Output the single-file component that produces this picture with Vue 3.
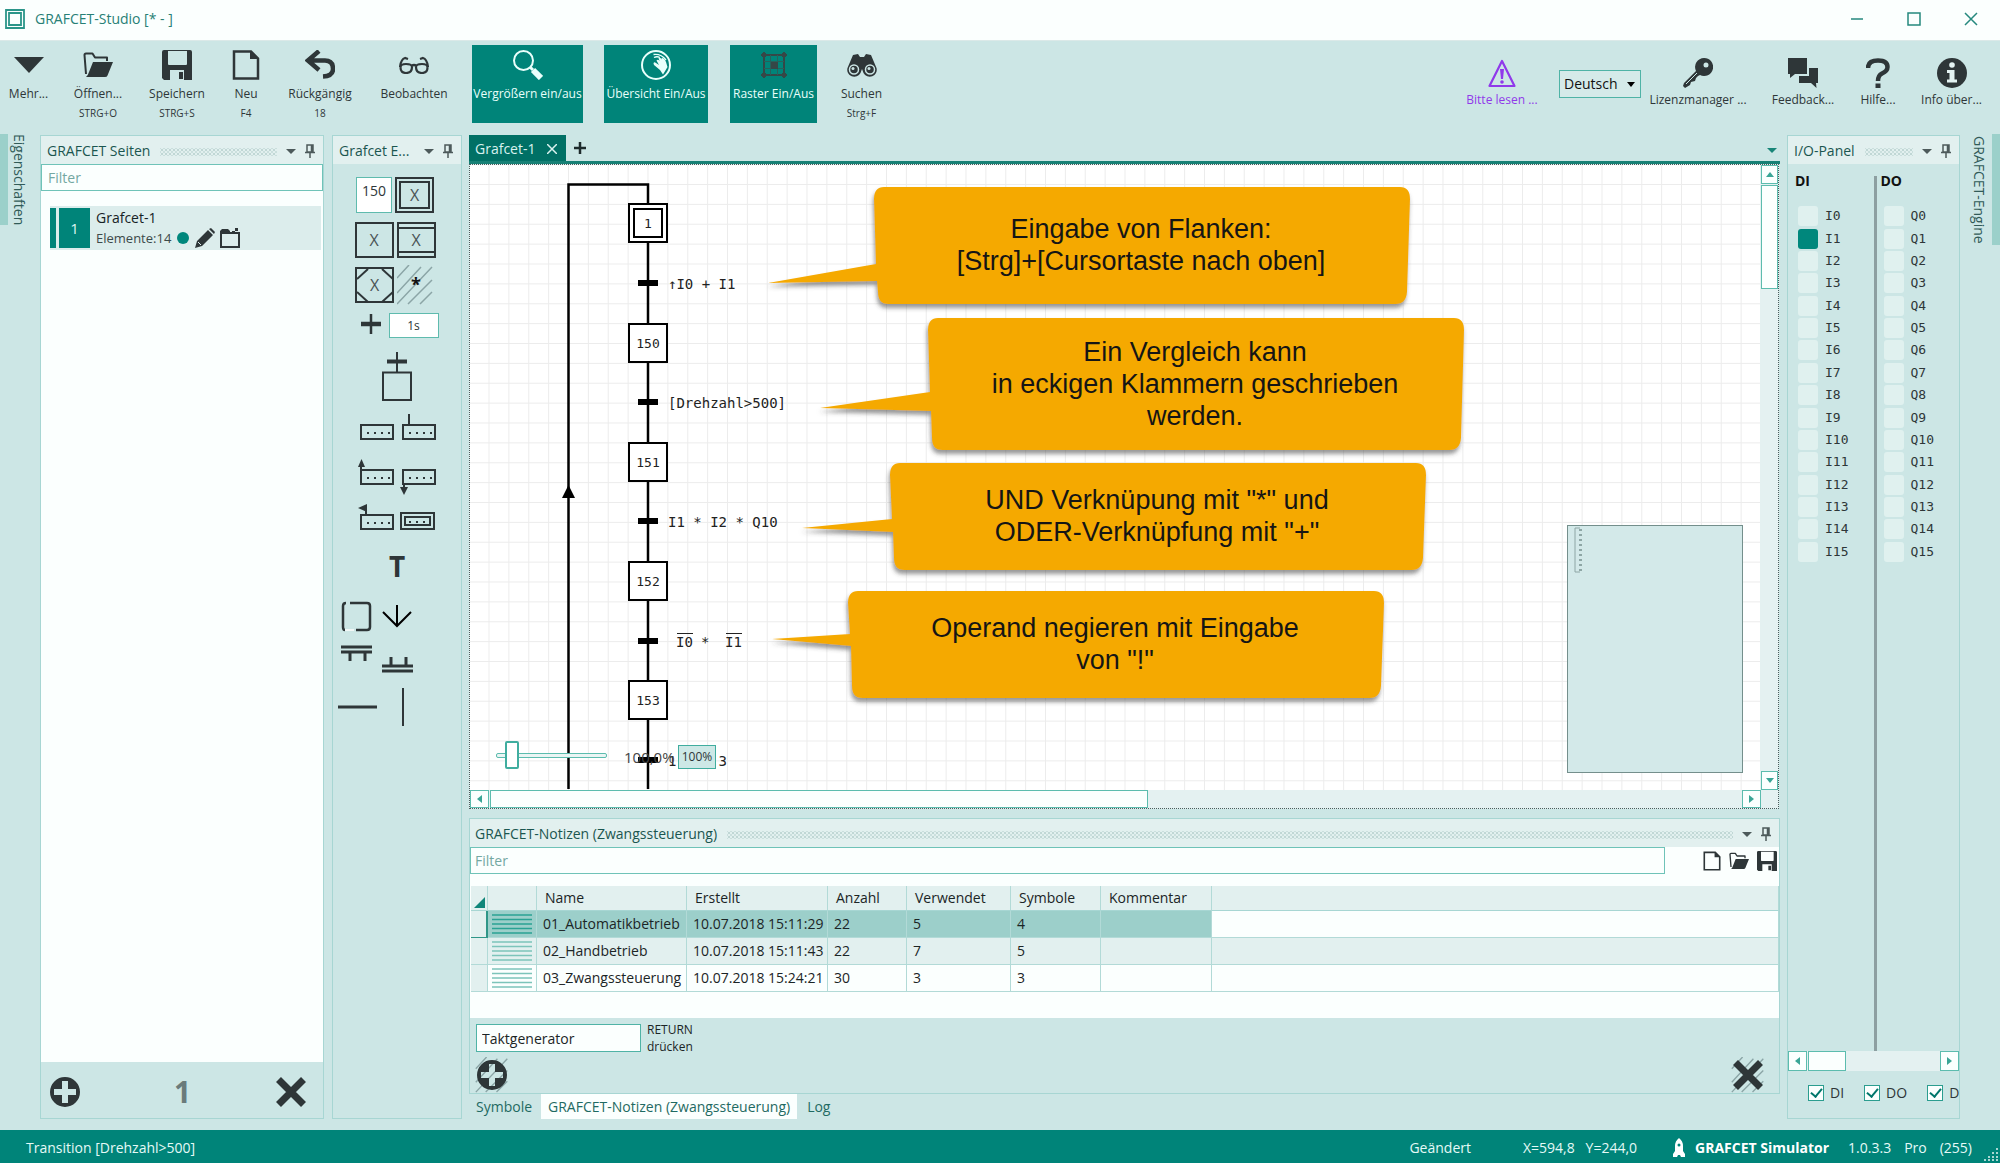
<script setup>
import { ref } from 'vue'

const inputs = ref(Array.from({ length: 16 }, (_, i) => i === 1))
const outputs = ref(Array.from({ length: 16 }, () => false))
const language = ref('Deutsch')
const zoom = ref(8)
const command = ref('Taktgenerator')
const stepNumber = ref('150')
const delay = ref('1s')
const visible = ref([true, true, true])

const steps = [
  { y: 223, name: '1', initial: true },
  { y: 343, name: '150' },
  { y: 462, name: '151' },
  { y: 581, name: '152' },
  { y: 700, name: '153' }
]
const transitions = [
  { y: 283, text: '↑I0 + I1' },
  { y: 402, text: '[Drehzahl>500]' },
  { y: 521, text: 'I1 * I2 * Q10' },
  { y: 641, text: '' },
  { y: 760, text: '1    ,3' }
]
const callouts = [
  { x: 874, y: 187, h: 117, tip: [768, 283], join: [264, 281], first: 238, lines: ['Eingabe von Flanken:', '[Strg]+[Cursortaste nach oben]'] },
  { x: 928, y: 318, h: 132, tip: [820, 408], join: [392, 411], first: 361, lines: ['Ein Vergleich kann', 'in eckigen Klammern geschrieben', 'werden.'] },
  { x: 890, y: 463, h: 107, tip: [802, 528], join: [519, 532], first: 509, lines: ['UND Verknüpung mit "*" und', 'ODER-Verknüpfung mit "+"'] },
  { x: 848, y: 591, h: 107, tip: [772, 639], join: [634, 646], first: 637, lines: ['Operand negieren mit Eingabe', 'von "!"'] }
]
function bubble(c) {
  const l = c.x, r = c.x + 536, t = c.y, b = c.y + c.h
  return `M${l + 10} ${t}H${r - 10}Q${r} ${t} ${r} ${t + 12}L${r - 3} ${b - 12}Q${r - 4} ${b} ${r - 14} ${b}` +
    `H${l + 14}Q${l + 4} ${b} ${l + 4} ${b - 12}L${l + 3} ${c.join[1]}L${c.tip[0]} ${c.tip[1]}L${l + 2} ${c.join[0]}L${l} ${t + 12}Q${l} ${t} ${l + 10} ${t}Z`
}

const notes = [
  { name: '01_Automatikbetrieb', created: '10.07.2018 15:11:29', count: 22, used: 5, symbols: 4 },
  { name: '02_Handbetrieb', created: '10.07.2018 15:11:43', count: 22, used: 7, symbols: 5 },
  { name: '03_Zwangssteuerung', created: '10.07.2018 15:24:21', count: 30, used: 3, symbols: 3 }
]
</script>

<template>
  <div class="app">
    <svg class="defs" width="0" height="0" aria-hidden="true">
      <symbol id="pin" viewBox="0 0 10 14"><path d="M2 1H8V8H2ZM6.500 1V8M0 8.500H10M5 9V14" fill="none" stroke="currentColor" stroke-width="1.500" /></symbol>
      <symbol id="doc" viewBox="0 0 28 30"><path d="M2 1.500H19L26 8.500V28.500H2Z" fill="none" stroke="currentColor" stroke-width="2.500" /><path d="M18 1V9H27Z" fill="currentColor" /></symbol>
      <symbol id="folder" viewBox="0 0 30 26"><path d="M3 22L1.500 3Q1.500 1.500 3 1.500H9.500L12 5.500H24V9" fill="none" stroke="currentColor" stroke-width="2" stroke-linejoin="round" /><path d="M10 10H30L24.500 23.500Q24 25 22 25H3Q5 23.500 6 20Z" fill="currentColor" /></symbol>
      <symbol id="save" viewBox="0 0 30 30"><path fill-rule="evenodd" d="M2 0H28Q30 0 30 2V30H2L0 28V2Q0 0 2 0ZM6 1V14Q6 15 7 15H24Q25 15 25 14V1ZM8 20V30H22V20ZM17 22H21V29H17Z" fill="currentColor" /></symbol>
      <symbol id="plus" viewBox="0 0 30 30"><path fill-rule="evenodd" d="M15 0A15 15 0 1 0 15 30A15 15 0 1 0 15 0ZM12 4H18V12H26V18H18V26H12V18H4V12H12Z" fill="currentColor" /></symbol>
      <symbol id="cross" viewBox="0 0 30 30"><path d="M2.500 2.500L27.500 27.500M27.500 2.500L2.500 27.500" stroke="currentColor" stroke-width="7" /></symbol>
      <symbol id="hatch" viewBox="0 0 36 40"><path d="M0 13L12 0M0 28L24 2M0 39L35 2M11 39L35 15M23 39L35 27" stroke="#8ba5a6" stroke-width="1.500" /></symbol>
    </svg>

    <header class="titlebar">
      <svg width="20" height="20" viewBox="0 0 20 20"><path d="M1 1H19V19H1ZM4 4H16V16H4Z" fill="none" stroke="#2b9589" stroke-width="1.800" /></svg>
      <h1>GRAFCET-Studio [* - ]</h1>
      <div class="window-buttons">
        <button aria-label="Minimieren"><svg width="14" height="14"><path d="M1 7H13" /></svg></button>
        <button aria-label="Maximieren"><svg width="14" height="14"><path d="M1 1H13V13H1Z" /></svg></button>
        <button aria-label="Schließen"><svg width="14" height="14"><path d="M1 1L13 13M13 1L1 13" /></svg></button>
      </div>
    </header>

    <nav class="toolbar">
      <div class="tools left">
        <button><span class="icon"><svg width="30" height="16"><path d="M0 0H30L15 16Z" fill="currentColor" /></svg></span><b>Mehr...</b></button>
        <button><span class="icon"><svg width="30" height="26"><use href="#folder" /></svg></span><b>Öffnen...</b><small>STRG+O</small></button>
        <button><span class="icon"><svg width="30" height="30"><use href="#save" /></svg></span><b>Speichern</b><small>STRG+S</small></button>
        <button><span class="icon"><svg width="28" height="30"><use href="#doc" /></svg></span><b>Neu</b><small>F4</small></button>
        <button><span class="icon"><svg width="30" height="30" viewBox="0 0 30 30"><path d="M14 1L3 10.500L14 20M4 10.500H20Q28 10.500 28 19Q28 26 18 26.500" fill="none" stroke="currentColor" stroke-width="4.500" /></svg></span><b>Rückgängig</b><small>18</small></button>
        <button><span class="icon"><svg width="30" height="18" viewBox="0 0 30 18"><path d="M1.500 11.500Q1.500 8 7 8Q13 8 13 11Q13 17 7 17Q1.500 17 1.500 11.500ZM17 11Q17 8 23 8Q28.500 8 28.500 11.500Q28.500 17 23 17Q17 17 17 11ZM12.500 10Q15 8 17.500 10M1 11Q2 3 6 2L9 3M29 11Q28 3 24 2L21 3" fill="none" stroke="currentColor" stroke-width="2.200" /></svg></span><b>Beobachten</b></button>
        <button class="on zoomer"><span class="icon"><svg width="30" height="30" viewBox="0 0 30 30"><circle cx="10.500" cy="10.500" r="9.500" fill="none" stroke="#e9fffb" stroke-width="2" /><path d="M17 17L20 20" stroke="#e9fffb" stroke-width="3" /><path d="M20 20L28 28" stroke="#e9fffb" stroke-width="6" /></svg></span><b>Vergrößern ein/aus</b></button>
        <button class="on overview"><span class="icon"><svg width="30" height="30" viewBox="0 0 30 30"><circle cx="15" cy="15" r="14" fill="none" stroke="#e9fffb" stroke-width="2" /><path d="M12.500 13.500Q13 11.500 15 13L18 15L15.500 10.500Q17 9 18.500 11L17.500 8Q19.500 7 21 9.500L20.500 8Q23 7.500 25 12L26.500 17L22 24.500L19 20L13 15Z" fill="#e9fffb" /><path d="M12.500 4.500Q20 3.500 25 10M13 7.500Q16 6 19 7.500" fill="none" stroke="#e9fffb" stroke-width="1.300" /></svg></span><b>Übersicht Ein/Aus</b></button>
        <button class="on raster"><span class="icon"><svg width="26" height="26" viewBox="0 0 26 26"><path d="M3 0V26M23 0V26M0 3H26M0 23H26" stroke="#354747" stroke-width="2" /><path d="M9.500 3V23M16.500 3V23M3 9.500H23M3 16.500H23" stroke="#27605b" stroke-width="1" /><path d="M10 10H17V17H10ZM1 1H5V5H1ZM21 1H25V5H21ZM1 21H5V25H1ZM21 21H25V25H21Z" fill="#354747" /></svg></span><b>Raster Ein/Aus</b></button>
        <button><span class="icon"><svg width="30" height="24" viewBox="0 0 30 24"><path d="M6 2L11 1L13 4H17L19 1L24 2L29.500 15A7 7 0 0 1 16.500 20L15 16L13.500 20A7 7 0 0 1 .5 15Z" fill="currentColor" /><g fill="none" stroke="#cce6e5"><circle cx="7" cy="16.500" r="4.500" stroke-width="1.500" /><circle cx="23" cy="16.500" r="4.500" stroke-width="1.500" /></g><circle cx="6" cy="15.500" r="1.500" fill="#cce6e5" /><circle cx="22" cy="15.500" r="1.500" fill="#cce6e5" /></svg></span><b>Suchen</b><small>Strg+F</small></button>
      </div>
      <div class="tools right">
        <button class="read"><span class="icon"><svg width="30" height="30" viewBox="0 0 30 30"><path d="M15 3L27.500 28H2.500Z" fill="none" stroke="currentColor" stroke-width="2.200" stroke-linejoin="round" /><path d="M13 11H17L16 21H14Z" fill="currentColor" /><circle cx="15" cy="24" r="1.800" fill="currentColor" /></svg></span><b>Bitte lesen ...</b></button>
        <div class="language">
          <select v-model="language" aria-label="Sprache"><option>Deutsch</option><option>English</option></select>
          <svg width="8" height="5"><path d="M0 0H8L4 5Z" fill="#000" /></svg>
        </div>
        <button><span class="icon"><svg width="30" height="30" viewBox="0 0 30 30"><path fill-rule="evenodd" d="M21 0A9 9 0 1 1 17 17L15 18L13 20L12 23L8 24L7 27L2 30L0 28L1 25L13 13A9 9 0 0 1 21 0ZM23 4.500A2.500 2.500 0 1 0 23 9.500A2.500 2.500 0 1 0 23 4.500Z" fill="currentColor" /><path d="M3 26L14 15" stroke="#cce6e5" stroke-width="1" /></svg></span><b>Lizenzmanager ...</b></button>
        <button><span class="icon"><svg width="30" height="30" viewBox="0 0 30 30"><path d="M0 0H19V16H7L2 20V16H0Z" fill="currentColor" /><path d="M21 10H30V25H28L28.500 30L23 25H11V18H21Z" fill="currentColor" /></svg></span><b>Feedback...</b></button>
        <button><span class="icon"><svg width="24" height="30" viewBox="0 0 24 30"><path d="M2 10Q2 2.500 12 2.500Q21.500 2.500 21.500 9Q21.500 13 16 15.500Q12 17.500 12 23" fill="none" stroke="currentColor" stroke-width="4.500" /><path d="M9.500 25.500H14.500V30H9.500Z" fill="currentColor" /></svg></span><b>Hilfe...</b></button>
        <button class="info"><span class="icon"><svg width="30" height="30" viewBox="0 0 30 30"><circle cx="15" cy="15" r="15" fill="currentColor" /><circle cx="15" cy="7" r="2.800" fill="#e4f3f2" /><path d="M10 12H17.500V21.500H20V24.500H10V21.500H12.500V15H10Z" fill="#e4f3f2" /></svg></span><b>Info über...</b></button>
      </div>
    </nav>

    <div class="workspace">
      <aside class="strip"><button>Eigenschaften</button></aside>

      <section class="panel pages">
        <header class="panel-head"><h2>GRAFCET Seiten</h2><i class="grip"></i><button class="caret" aria-label="Menü"></button><button class="pin" aria-label="Anheften"><svg width="10" height="14"><use href="#pin" /></svg></button></header>
        <input class="filter" type="text" placeholder="Filter" aria-label="Seiten filtern">
        <div class="page-list">
          <article class="page">
            <span class="mark"></span><span class="index">1</span>
            <div>
              <p class="page-name">Grafcet-1</p>
              <p class="page-info">Elemente:14
                <svg width="14" height="14"><circle cx="7" cy="7" r="6" fill="#00877c" /></svg>
                <svg width="20" height="20" viewBox="0 0 20 20"><path d="M0 20L2 13L13 2L18 7L7 18ZM14 1L16 0L20 4L19 6Z" fill="#2e3638" /><path d="M3 14L6 17" stroke="#e2f0ef" stroke-width="1" /></svg>
                <svg width="20" height="20" viewBox="0 0 20 20"><path d="M1 5V19H19V5Z" fill="none" stroke="#2e3638" stroke-width="2" /><path d="M0 6V3L2 1H8L10 3V6ZM12 3H15V5H12ZM15 0H18V3H15Z" fill="#2e3638" /></svg>
              </p>
            </div>
          </article>
        </div>
        <footer class="page-foot">
          <button aria-label="Seite hinzufügen"><svg width="30" height="30"><use href="#plus" /></svg></button>
          <strong>1</strong>
          <button aria-label="Seite löschen"><svg width="30" height="30"><use href="#cross" /></svg></button>
        </footer>
      </section>

      <section class="panel elements">
        <header class="panel-head"><h2>Grafcet E...</h2><i class="space"></i><button class="caret" aria-label="Menü"></button><button class="pin" aria-label="Anheften"><svg width="10" height="14"><use href="#pin" /></svg></button></header>
        <div class="palette">
          <div class="row h36 tight">
            <input v-model="stepNumber" class="number" type="text" aria-label="Schrittnummer">
            <button class="cell dbl" aria-label="Anfangsschritt"><span>X</span></button>
          </div>
          <div class="row h36 tight">
            <button class="cell" aria-label="Schritt">X</button>
            <button class="cell macro" aria-label="Makroschritt"><span>X</span></button>
          </div>
          <div class="row h36 tight">
            <button class="cell oct" aria-label="Einschließender Schritt"><svg width="36" height="33" viewBox="0 0 36 33"><path d="M0 10L11 0M25 0L36 10M0 23L11 33M25 33L36 23" stroke="#2e3638" stroke-width="2" /></svg><span>X</span></button>
            <button class="star" aria-label="Aktivierung"><svg width="36" height="40"><use href="#hatch" /></svg><span>*</span></button>
          </div>
          <div class="row h26 wait">
            <button aria-label="Transition"><svg width="20" height="20"><path d="M0 10H20" stroke="#2e3638" stroke-width="4.500" /><path d="M10 0V20" stroke="#2e3638" stroke-width="2.500" /></svg></button>
            <input v-model="delay" class="delay" type="text" aria-label="Zeit">
          </div>
          <div class="row h54"><button aria-label="Transition und Schritt"><svg width="30" height="49" viewBox="0 0 30 49"><path d="M5 9.500H25" stroke="#2e3638" stroke-width="4" /><path d="M15 0V20M1 20.500H29V48H1Z" fill="none" stroke="#2e3638" stroke-width="2" /></svg></button></div>
          <div class="row h30 acts">
            <button aria-label="Aktion"><svg width="36" height="26"><path d="M3 11H35V25H3Z" class="ol" /><path d="M9 19H32" class="dots" /></svg></button>
            <button aria-label="Bedingte Aktion"><svg width="36" height="26"><path d="M3 11H35V25H3ZM9 0V11" class="ol" /><path d="M9 19H32" class="dots" /></svg></button>
          </div>
          <div class="row h46 acts">
            <button aria-label="Aktion bei Aktivierung"><svg width="36" height="36"><path d="M3 11H35V25H3ZM3 11V5" class="ol" /><path d="M9 19H32" class="dots" /><path d="M0 8L3.500 0L7 8Z" fill="#2e3638" /></svg></button>
            <button aria-label="Aktion bei Deaktivierung"><svg width="36" height="36"><path d="M3 11H35V25H3ZM4 25V30" class="ol" /><path d="M9 19H32" class="dots" /><path d="M0 28H8L4 36Z" fill="#2e3638" /></svg></button>
          </div>
          <div class="row h26 acts">
            <button aria-label="Aktion bei Ereignis"><svg width="36" height="26"><path d="M3 11H35V25H3ZM8 11V3" class="ol" /><path d="M9 19H32" class="dots" /><path d="M0 4L9 0V8Z" fill="#2e3638" /></svg></button>
            <button aria-label="Zwangssteuerung"><svg width="36" height="26"><path d="M1 9H34V25H1ZM5 13H30V21H5Z" class="ol" /><path d="M9 18H28" class="dots" /></svg></button>
          </div>
          <div class="row h53"><button class="text-tool">T</button></div>
          <div class="row h31 links">
            <button aria-label="Schleife"><svg width="31" height="31"><path d="M9 2H26Q29 2 29 5V26Q29 29 26 29H15M4 29Q2 29 2 26V5Q2 2 5 2" fill="none" stroke="#2e3638" stroke-width="2.500" /><path d="M4 29H13" stroke="#f2f8f7" stroke-width="2" /></svg></button>
            <button aria-label="Verzweigung"><svg width="30" height="27"><path d="M1 7L15 21L29 7M15 0V21" fill="none" stroke="#000" stroke-width="2" /></svg></button>
          </div>
          <div class="row h32 links">
            <button class="up" aria-label="Parallele Verzweigung"><svg width="31" height="16"><path d="M0 2H31M0 7H31M9 7V16M24 7V16" fill="none" stroke="#2e3638" stroke-width="3" /></svg></button>
            <button aria-label="Parallele Zusammenführung"><svg width="31" height="16"><path d="M0 9H31M0 14H31M9 0V9M24 0V9" fill="none" stroke="#2e3638" stroke-width="3" /></svg></button>
          </div>
          <div class="row h50 lines">
            <button aria-label="Horizontale Linie"><svg width="39" height="4"><path d="M0 2H39" stroke="#2e3638" stroke-width="3" /></svg></button>
            <button aria-label="Vertikale Linie"><svg width="4" height="38"><path d="M2 0V38" stroke="#2e3638" stroke-width="2" /></svg></button>
          </div>
        </div>
      </section>

      <main class="centre">
        <div class="doc-tabs">
          <button class="doc-tab">Grafcet-1<svg width="10" height="10"><path d="M0 0L10 10M10 0L0 10" stroke="currentColor" stroke-width="1.500" /></svg></button>
          <button class="add" aria-label="Neues Dokument"><svg width="12" height="12"><path d="M0 6H12M6 0V12" stroke="#1e2b2c" stroke-width="2.500" /></svg></button>
          <button class="more" aria-label="Dokumentliste"></button>
        </div>
        <div class="editor">
          <div class="canvas">
            <svg class="chart" width="100%" height="100%">
              <defs>
                <pattern id="grid" x="568" y="184" width="19.875" height="19.875" patternUnits="userSpaceOnUse"><path d="M.5 0V20M0 .5H20" stroke="#ececec" stroke-width="1" fill="none" /></pattern>
                <filter id="shade" x="-5%" y="-5%" width="110%" height="120%"><feDropShadow dx="-1" dy="4" stdDeviation="2" flood-color="#444" flood-opacity=".55" /></filter>
              </defs>
              <g transform="translate(-470 -165)">
                <rect x="470" y="165" width="100%" height="100%" fill="url(#grid)" />
                <path d="M568.500 789V184.500H648V789" fill="none" stroke="#000" stroke-width="2.500" />
                <path d="M568.500 485L575 498H562Z" />
                <g v-for="s in steps" :key="s.name">
                  <rect x="629" :y="s.y - 19" width="38" height="38" fill="#fff" stroke="#000" stroke-width="2" />
                  <rect v-if="s.initial" x="634" :y="s.y - 14" width="28" height="28" fill="#fff" stroke="#000" stroke-width="2" />
                  <text class="step" x="648" :y="s.y + 5">{{ s.name }}</text>
                </g>
                <g v-for="t in transitions" :key="t.y">
                  <rect x="638" :y="t.y - 3" width="20" height="6" />
                  <text class="cond" x="668" :y="t.y + 6">{{ t.text }}</text>
                </g>
                <text class="cond" x="676" y="647">I0</text><text class="cond" x="701" y="647">*</text><text class="cond" x="725" y="647">I1</text>
                <path d="M677 633.500H693M726 633.500H742" stroke="#222" />
                <g v-for="c in callouts" :key="c.y">
                  <path :d="bubble(c)" fill="#f5a906" filter="url(#shade)" />
                  <text v-for="(line, i) in c.lines" :key="line" class="hint" :x="c.x + 267" :y="c.first + i * 32">{{ line }}</text>
                </g>
              </g>
            </svg>
            <div class="zoom-box">
              <input v-model="zoom" type="range" min="0" max="100" aria-label="Vergrößerung">
              <output>100,0%</output>
              <button>100%</button>
            </div>
            <div class="minimap"><svg width="10" height="48"><path d="M1 2V46H6M1 2H6" fill="none" stroke="#8ea6a5" /><path d="M6.500 3V46" stroke="#8ea6a5" stroke-width="3" stroke-dasharray="2 3" fill="none" /></svg></div>
          </div>
          <div class="vbar"><button aria-label="Nach oben"><svg width="8" height="5"><path d="M0 5H8L4 0Z" /></svg></button><i></i><button aria-label="Nach unten"><svg width="8" height="5"><path d="M0 0H8L4 5Z" /></svg></button></div>
          <div class="hbar"><button aria-label="Nach links"><svg width="5" height="8"><path d="M5 0V8L0 4Z" /></svg></button><i></i><button aria-label="Nach rechts"><svg width="5" height="8"><path d="M0 0V8L5 4Z" /></svg></button></div>
        </div>

        <section class="panel notes">
          <header class="panel-head"><h2>GRAFCET-Notizen (Zwangssteuerung)</h2><i class="grip"></i><button class="caret" aria-label="Menü"></button><button class="pin" aria-label="Anheften"><svg width="10" height="14"><use href="#pin" /></svg></button></header>
          <div class="note-filter">
            <input class="filter" type="text" placeholder="Filter" aria-label="Notizen filtern">
            <button aria-label="Neu"><svg width="18" height="20"><use href="#doc" /></svg></button>
            <button aria-label="Öffnen"><svg width="20" height="18"><use href="#folder" /></svg></button>
            <button aria-label="Speichern"><svg width="20" height="20"><use href="#save" /></svg></button>
          </div>
          <div class="table-box">
            <table>
              <colgroup><col class="c0"><col class="c1"><col class="c2"><col class="c3"><col class="c4"><col class="c5"><col class="c6"><col class="c7"><col></colgroup>
              <thead><tr><th class="corner"><svg width="11" height="11"><path d="M11 0V11H0Z" fill="#10867a" /></svg></th><th></th><th>Name</th><th>Erstellt</th><th>Anzahl</th><th>Verwendet</th><th>Symbole</th><th>Kommentar</th><th></th></tr></thead>
              <tbody>
                <tr v-for="(n, i) in notes" :key="n.name" :class="{ selected: i === 0, even: i === 1 }">
                  <td class="handle"></td>
                  <td class="sheet"><svg width="40" height="20"><path d="M0 1H40M0 5.500H40M0 10H40M0 14.500H40M0 19H40" stroke-width="1.500" /></svg></td>
                  <td>{{ n.name }}</td><td>{{ n.created }}</td><td>{{ n.count }}</td><td>{{ n.used }}</td><td>{{ n.symbols }}</td><td></td><td></td>
                </tr>
              </tbody>
            </table>
          </div>
          <div class="note-entry"><input id="cmd" v-model="command" type="text"><label for="cmd">RETURN<br>drücken</label></div>
          <div class="note-foot">
            <button aria-label="Notiz hinzufügen"><svg class="back" width="36" height="36"><use href="#hatch" /></svg><svg width="30" height="30"><use href="#plus" /></svg></button>
            <button aria-label="Notiz löschen"><svg class="back" width="36" height="36"><use href="#hatch" /></svg><svg width="30" height="30"><use href="#cross" /></svg></button>
          </div>
        </section>
        <div class="bottom-tabs"><button>Symbole</button><button class="active">GRAFCET-Notizen (Zwangssteuerung)</button><button>Log</button></div>
      </main>

      <section class="panel io">
        <header class="panel-head"><h2>I/O-Panel</h2><i class="grip"></i><button class="caret" aria-label="Menü"></button><button class="pin" aria-label="Anheften"><svg width="10" height="14"><use href="#pin" /></svg></button></header>
        <div class="io-body">
          <div class="io-col">
            <h3>DI</h3>
            <div class="bits"><label v-for="(v, i) in inputs" :key="i"><input v-model="inputs[i]" type="checkbox">I{{ i }}</label></div>
          </div>
          <i class="divider"></i>
          <div class="io-col">
            <h3>DO</h3>
            <div class="bits"><label v-for="(v, i) in outputs" :key="i"><input v-model="outputs[i]" type="checkbox">Q{{ i }}</label></div>
          </div>
        </div>
        <div class="hbar"><button aria-label="Nach links"><svg width="5" height="8"><path d="M5 0V8L0 4Z" /></svg></button><i></i><button aria-label="Nach rechts"><svg width="5" height="8"><path d="M0 0V8L5 4Z" /></svg></button></div>
        <div class="io-checks">
          <label><input v-model="visible[0]" type="checkbox">DI</label>
          <label><input v-model="visible[1]" type="checkbox">DO</label>
          <label><input v-model="visible[2]" type="checkbox">D</label>
        </div>
      </section>

      <aside class="strip end"><button>GRAFCET-Engine</button></aside>
    </div>

    <footer class="status">
      <span>Transition [Drehzahl&gt;500]</span>
      <span class="changed">Geändert</span>
      <span class="pos">X=594,8&nbsp;&nbsp; Y=244,0</span>
      <svg width="12" height="20" viewBox="0 0 12 20"><path d="M6 0Q10 3 10 8V13L12 16V19H8L7 17H5L4 19H0V16L2 13V8Q2 3 6 0Z" fill="#fff" /><circle cx="6" cy="7" r="1.500" fill="#00847a" /></svg>
      <strong>GRAFCET Simulator</strong>
      <span class="ver">1.0.3.3</span><span class="ed">Pro</span><span>(255)</span>
      <svg class="resize" width="14" height="14"><path d="M12 2h2M8 6h2M12 6h2M4 10h2M8 10h2M12 10h2M0 13h2M4 13h2M8 13h2M12 13h2" stroke="#a8d6d1" stroke-width="2" /></svg>
    </footer>
  </div>
</template>

<style>
body { margin: 0; }
</style>

<style scoped>
* { box-sizing: border-box; }
.app {
  display: flex; flex-direction: column; min-height: 100vh; overflow: hidden;
  background: #cce6e5; color: #2e3638;
  font: 14px/20px "Open Sans", "Noto Sans", sans-serif;
}
.defs { position: absolute; }
svg { display: block; flex: none; }
h1, h2, h3, p { margin: 0; font: inherit; }
button { border: 0; padding: 0; background: none; font: inherit; color: inherit; white-space: nowrap; }
input, select { font: inherit; color: inherit; border-radius: 0; outline: 0; margin: 0; }

.titlebar { display: flex; align-items: center; height: 41px; padding: 0 22px 2px 5px; gap: 10px; background: #fbfffe; color: #287f76; border-bottom: 1px solid #dbe9e8; }
.window-buttons { display: flex; gap: 43px; margin-left: auto; }
.window-buttons path { fill: none; stroke: #26897e; stroke-width: 1.5; }

.toolbar { display: flex; justify-content: space-between; padding: 4px 0 11px; }
.tools { display: grid; }
.left { grid-template-columns: 57px 82px 76px 62px 86px 102px 126px 130px 105px 71px; }
.right { grid-template-columns: 98px 98px 98px 112px 38px 103px; }
.tools > button { display: flex; flex-direction: column; align-items: center; height: 78px; padding-top: 5px; font-size: 12px; }
.right > button { padding-top: 13px; }
.right > button b { line-height: 24px; }
.right > .info { padding-left: 6px; }
.icon { display: flex; align-items: center; height: 30px; }
.tools b { font-weight: 400; line-height: 28px; }
.tools small { font-size: 10px; line-height: 10px; }
.on { background: #008479; color: #e9fffb; }
.zoomer { margin: 0 8px 0 7px; }
.overview { margin: 0 13px; }
.raster { margin: 0 9px; }
.read { color: #9039ea; }
.language { position: relative; align-self: start; justify-self: center; width: 82px; margin-top: 25px; }
.language select { appearance: none; width: 100%; height: 28px; padding: 0 4px; border: 1px solid #4fb3a6; background: #d5eae9; color: #111; }
.language svg { position: absolute; right: 6px; top: 12px; pointer-events: none; }

.workspace { display: flex; flex: 1; padding-bottom: 11px; }
.strip { width: 40px; flex: none; }
.strip button { writing-mode: vertical-rl; line-height: 20px; padding-left: 1px; border-left: 8px solid #9bd0ca; height: 91px; color: #315b58; }
.strip.end { display: flex; justify-content: flex-end; }
.strip.end button { border-left: 0; border-right: 8px solid #9bd0ca; padding: 0 3px 0 0; height: 111px; }

.panel { display: flex; flex-direction: column; border: 1px solid #a7d6d3; margin-top: 1px; }
.panel-head { display: flex; align-items: center; height: 28px; padding: 2px 8px 0 6px; background: #e2f0ef; color: #1b5650; flex: none; }
.panel-head h2 { white-space: nowrap; }
.grip, .space { flex: 1; height: 8px; margin: 2px 9px 0 10px; }
.grip { background: radial-gradient(circle, #9fbfbd 1px, transparent 1px) 0 0 / 4px 4px, radial-gradient(circle, #b4cfcd 1px, transparent 1px) 2px 2px / 4px 4px; opacity: .5; }
.caret { border: 5px solid transparent; border-top-color: #4d5a5b; border-bottom: 0; margin-right: 9px; }
.pin { color: #4d5a5b; }
.filter { height: 27px; padding: 0 6px; border: 1px solid #6fc3b8; background: #fbfffe; }
.filter::placeholder { color: #74a8a2; opacity: 1; }

.pages { width: 284px; margin-right: 8px; flex: none; }
.page-list { flex: 1; background: #fbfffe; padding: 15px 2px 0 9px; }
.page { display: flex; align-items: center; height: 44px; background: #dcedec; }
.mark { width: 6px; height: 40px; background: #008479; margin-right: 3px; }
.index { width: 31px; height: 40px; line-height: 40px; text-align: center; background: #008479; color: #dff5f2; margin-right: 6px; font-size: 15px; }
.page-name { color: #162225; }
.page-info { display: flex; align-items: center; gap: 5px; font-size: 13px; color: #3c4a4b; }
.page-foot { display: flex; align-items: center; justify-content: space-between; height: 56px; padding: 4px 17px 0 9px; }
.page-foot strong { font-size: 30px; color: #6a7b7b; padding-left: 9px; }

.elements { width: 130px; margin-right: 7px; flex: none; }
.elements .space { margin: 0; }
.palette { display: flex; flex-direction: column; gap: 9px; padding-top: 13px; }
.row { display: flex; justify-content: center; align-items: flex-end; }
.row button { display: block; }
.h26 { height: 26px; } .h30 { height: 30px; } .h31 { height: 31px; } .h32 { height: 32px; } .h36 { height: 36px; }
.h46 { height: 46px; } .h50 { height: 50px; } .h53 { height: 53px; align-items: center; } .h54 { height: 54px; }
.tight { gap: 3px; padding-right: 4px; }
.number { width: 36px; height: 36px; padding: 0 0 9px; text-align: center; border: 1px solid #5fbbae; background: #fff; }
.row .cell { display: grid; place-items: center; position: relative; width: 39px; height: 36px; border: 2px solid #2e3638; color: #4a5456; font-size: 16px; }
.dbl span { border: 2px solid #2e3638; width: 31px; height: 28px; line-height: 24px; }
.macro span { border: solid #2e3638; border-width: 2px 0; width: 35px; height: 26px; line-height: 22px; }
.oct svg, .star svg { position: absolute; left: 0; top: 0; }
.oct span { position: relative; }
.row .star { position: relative; width: 38px; height: 38px; font-size: 18px; font-weight: 700; color: #111; }
.star span { position: relative; }
.wait { gap: 8px; padding-left: 5px; }
.wait button { padding-bottom: 4px; }
.delay { width: 50px; height: 25px; padding: 0; text-align: center; font-size: 12px; border: 1px solid #5fbbae; background: #fff; }
.acts { gap: 6px; }
.ol { fill: none; stroke: #2e3638; stroke-width: 2; }
.dots { stroke: #2e3638; stroke-width: 2; stroke-dasharray: 2 5; }
.text-tool { font: 700 28px/32px "Open Sans", sans-serif; }
.links { justify-content: flex-start; gap: 10px; padding-left: 8px; }
.links .up { align-self: flex-start; padding-top: 4px; }
.lines { justify-content: flex-start; align-items: center; gap: 24px; padding-left: 5px; }

.centre { flex: 1; min-width: 0; display: flex; flex-direction: column; margin-right: 7px; }
.doc-tabs { display: flex; align-items: center; height: 29px; margin-top: 1px; border-bottom: 3px solid #178075; }
.doc-tab { display: flex; align-items: center; gap: 12px; height: 26px; padding: 2px 9px 0 6px; background: #007065; color: #d9f2ef; }
.add { margin-left: 8px; }
.more { margin: 4px 3px 0 auto; border: 5px solid transparent; border-top-color: #188578; border-bottom: 0; }
.editor { flex: 1; display: grid; grid-template: 1fr 18px / 1fr 17px; border: 1px dotted #4a5c5c; background: #e4f1f1; margin-right: 1px; }
.canvas { position: relative; background: #fff; overflow: hidden; min-height: 400px; margin-right: 1px; }
.chart { position: absolute; inset: 0; }
.step, .cond { font-family: "DejaVu Sans Mono", monospace; fill: #222; white-space: pre; }
.step { font-size: 13px; text-anchor: middle; }
.cond { font-size: 14px; }
.hint { font: 27px "Liberation Sans", Arial, sans-serif; text-anchor: middle; fill: #151515; }
.zoom-box { position: absolute; left: 26px; bottom: 21px; display: flex; align-items: center; font-size: 15px; }
.zoom-box input { appearance: none; width: 111px; height: 28px; background: none; margin-right: 17px; }
.zoom-box input::-webkit-slider-runnable-track { height: 5px; border: 1px solid #5cbcae; border-radius: 2px; background: #eaf5f4; }
.zoom-box input::-webkit-slider-thumb { appearance: none; width: 14px; height: 28px; margin-top: -13px; border: 2px solid #40ad9f; border-radius: 2px; background: #fff; }
.zoom-box output { width: 54px; padding-top: 4px; color: #444; }
.zoom-box button { width: 38px; height: 24px; margin-top: 4px; border: 1px solid #40ad9f; background: #cde8e6; font-size: 12px; }
.minimap { position: absolute; right: 17px; bottom: 17px; width: 176px; height: 248px; padding: 0 6px; border: 1px solid #748f8c; background: #d3e9e9; }
.vbar { display: flex; flex-direction: column; gap: 1px; }
.hbar { display: flex; gap: 1px; background: #e4f1f1; }
.vbar button, .hbar button { display: grid; place-items: center; flex: none; border: 1px solid #5cbcae; background: #fbfffe; }
.vbar path, .hbar path { fill: #3aa596; }
.vbar button { height: 19px; }
.hbar button { width: 19px; }
.vbar i { height: 104px; border: 1px solid #5cbcae; background: #fbfffe; margin-bottom: auto; }
.hbar i { width: 51%; border: 1px solid #5cbcae; background: #fbfffe; margin-right: auto; }

.notes { margin-top: 9px; }
.notes .panel-head { padding-left: 5px; }
.note-filter { display: flex; align-items: center; gap: 8px; padding-right: 2px; background: #fbfffe; }
.note-filter .filter { flex: 1; margin-right: 30px; padding: 0 4px; }
.table-box { background: #fbfffe; padding: 12px 0 26px 1px; }
table { width: 100%; border-collapse: separate; border-spacing: 0; table-layout: fixed; color: #1b2526; }
.c0 { width: 17px; } .c1 { width: 49px; } .c2 { width: 150px; } .c3 { width: 141px; } .c4 { width: 79px; } .c5 { width: 104px; } .c6 { width: 90px; } .c7 { width: 111px; }
th, td { border-right: 1px solid #b2dad7; padding: 0 0 0 6px; text-align: left; font-weight: 400; white-space: nowrap; }
th { height: 25px; padding-left: 8px; background: #e2f0ef; border-bottom: 1px solid #a7d6d3; }
td { height: 27px; border-bottom: 1px solid #b2dad7; }
.corner { padding: 8px 0 0 3px; }
.handle { background: #e2f0ef; }
.sheet { padding-left: 4px; stroke: #7cc4ba; }
.even td { background: #e2f0ef; }
.selected td { background: #9ccfca; }
.selected td:last-child { background: #fbfffe; }
.selected .handle { background: #e2f0ef; border-right: 2px solid #2f9688; border-bottom: 1px solid #2f9688; }
.selected .sheet { stroke: #2aa294; }
.note-entry { display: flex; gap: 6px; padding: 3px 6px; font-size: 12px; line-height: 17px; height: 38px; color: #1b2526; }
.note-entry input { width: 165px; height: 28px; margin-top: 3px; padding: 0 5px; border: 1px solid #4fb3a6; background: #fbfffe; font-size: 14px; }
.note-foot { display: flex; justify-content: space-between; height: 37px; padding: 0 13px 0 4px; }
.note-foot button { position: relative; display: grid; place-items: center; width: 36px; height: 37px; }
.note-foot .back { position: absolute; left: 0; top: 1px; }
.note-foot svg { position: relative; }
.bottom-tabs { display: flex; height: 25px; color: #1f6a62; }
.bottom-tabs button { padding: 0 7px; }
.bottom-tabs .active { background: #fbfffe; margin: 0 3px 0 2px; }

.io { width: 173px; flex: none; overflow: hidden; }
.io-body { display: flex; flex: 1; padding: 6px 0 0 7px; }
.io-col { width: 83px; }
.divider { width: 3px; flex: none; margin: 6px 4px 0 0; background: #8d9fa1; }
.io h3 { font-weight: 700; color: #111; line-height: 22px; }
.bits { display: grid; grid-template-rows: repeat(16, 1fr); height: 358px; margin-top: 13px; font: 13px/20px "DejaVu Sans Mono", monospace; }
.bits label { display: flex; align-items: center; gap: 7px; padding-left: 3px; }
.bits input { appearance: none; width: 20px; height: 20px; border-radius: 3px; background: #e0f1ef; }
.bits input:checked { background: #00877c; }
.io .hbar { height: 20px; }
.io .hbar i { width: 38px; }
.io-checks { display: flex; height: 47px; padding: 0 0 4px 20px; align-items: center; gap: 20px; }
.io-checks label { display: flex; align-items: center; gap: 6px; }
.io-checks input { appearance: none; width: 16px; height: 16px; border: 1px solid #2b9d8f; background: #fbfffe; }
.io-checks input:checked::before { content: ""; display: block; width: 5px; height: 9px; margin: 0 0 0 4px; border: solid #00766b; border-width: 0 2px 2px 0; transform: rotate(40deg); }

.status { display: flex; align-items: center; height: 33px; padding: 2px 2px 0 26px; background: #008479; color: #e5faf7; white-space: nowrap; }
.changed { margin: 0 52px 0 auto; }
.pos { margin-right: 36px; }
.status strong { margin: 0 19px 0 10px; color: #fff; }
.ver, .ed { margin-right: 13px; }
.resize { margin: 12px 0 0 12px; }
</style>
